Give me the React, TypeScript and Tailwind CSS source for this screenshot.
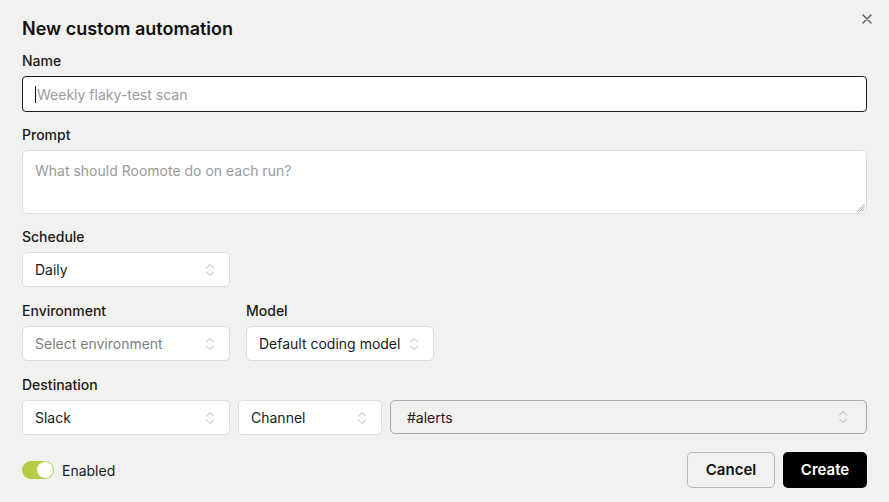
import React from 'react';

const FONT = { fontFamily: 'Inter, "Noto Sans", sans-serif' };
const LABEL = 'mb-[7px] block text-[14px] font-medium leading-[17px] text-[#1a1a1a]';
const SEL = 'flex h-[35px] items-center justify-between rounded-[5px] border border-[#dedddb] bg-white pl-[12px] pr-[14px] text-[14px] text-[#1a1a1a]';

function Chevrons() {
  return (
    <svg width="10" height="14" viewBox="0 0 10 14" fill="none" stroke="#ababab" strokeWidth="0.9" strokeLinecap="round" strokeLinejoin="round">
      <path d="M1.5 5L5 1.5L8.5 5" />
      <path d="M1.5 9L5 12.5L8.5 9" />
    </svg>
  );
}

function Select({ value, w, muted, className = '' }: { value: string; w: string; muted?: boolean; className?: string }) {
  return (
    <div className={`${SEL} ${w} ${className}`}>
      <span className={muted ? 'text-[#7d7d7d]' : ''}>{value}</span>
      <Chevrons />
    </div>
  );
}

export default function App() {
  return (
    <div style={FONT} className="relative h-[502px] w-[889px] bg-[#f1f1f0] px-[22px] pt-[18px]">
      <button className="absolute right-[16px] top-[13px] text-[#555]">
        <svg width="12" height="12" viewBox="0 0 12 12" stroke="currentColor" strokeWidth="1.3" strokeLinecap="round"><path d="M2 2L10 10M10 2L2 10" /></svg>
      </button>
      <h1 className="text-[18px] font-semibold leading-[22px] text-[#111]">New custom automation</h1>

      <div className="mt-[12px]">
        <label className={LABEL}>Name</label>
        <div className="flex h-[36px] items-center rounded-[4px] border-[1.5px] border-[#1c1c1c] bg-white pl-[12px] text-[14px]">
          <span className="mr-[1px] h-[17px] w-[1px] bg-[#111]" />
          <span className="text-[#9a9a9a]">Weekly flaky-test scan</span>
        </div>
      </div>

      <div className="mt-[14px]">
        <label className={LABEL}>Prompt</label>
        <div className="relative h-[64px] rounded-[5px] border border-[#dedddb] bg-white px-[12px] pt-[9px] text-[14px] text-[#9a9a9a]">
          What should Roomote do on each run?
          <svg className="absolute bottom-[1px] right-[1px]" width="9" height="9" viewBox="0 0 9 9" stroke="#8a8a8a" strokeWidth="0.8">
            <path d="M8.5 1L1 8.5M8.5 3.5L3.5 8.5M8.5 6L6 8.5" />
          </svg>
        </div>
      </div>

      <div className="mt-[14px]">
        <label className={LABEL}>Schedule</label>
        <Select value="Daily" w="w-[208px]" />
      </div>

      <div className="mt-[15px] flex gap-[16px]">
        <div>
          <label className={LABEL}>Environment</label>
          <Select value="Select environment" w="w-[208px]" muted />
        </div>
        <div>
          <label className={LABEL}>Model</label>
          <Select value="Default coding model" w="w-[188px]" />
        </div>
      </div>

      <div className="mt-[15px]">
        <label className={LABEL}>Destination</label>
        <div className="flex gap-[8px]">
          <Select value="Slack" w="w-[208px]" />
          <Select value="Channel" w="w-[144px]" />
          <div className="flex h-[34px] flex-1 items-center justify-between rounded-[5px] border border-[#a9a9a7] bg-[#f1f1f0] pl-[16px] pr-[18px] text-[14px] text-[#1a1a1a]">
            <span>#alerts</span>
            <Chevrons />
          </div>
        </div>
      </div>

      <div className="mt-[17px] flex items-center justify-between">
        <div className="flex items-center gap-[8px]">
          <div className="flex h-[18px] w-[32px] items-center justify-end rounded-full bg-[#b5cc45] pr-[1px]">
            <div className="h-[16px] w-[16px] rounded-full bg-white" />
          </div>
          <span className="text-[14px] text-[#1a1a1a]">Enabled</span>
        </div>
        <div className="flex gap-[8px]">
          <button className="h-[36px] w-[88px] rounded-[5px] border border-[#b9b9b7] bg-[#f1f1f0] text-[15px] font-semibold text-[#111]">Cancel</button>
          <button className="h-[36px] w-[84px] rounded-[5px] bg-black text-[15px] font-semibold text-white">Create</button>
        </div>
      </div>
    </div>
  );
}
